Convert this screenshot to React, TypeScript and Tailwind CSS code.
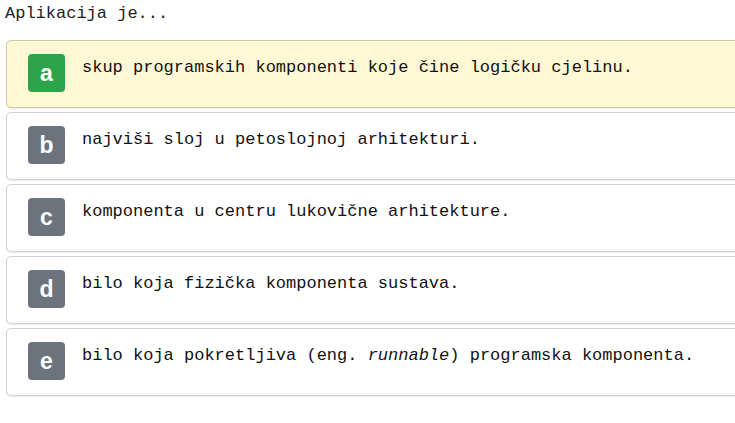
import React from 'react';

interface Option {
  key: string;
  text: React.ReactNode;
  correct?: boolean;
}

const options: Option[] = [
  { key: 'a', text: 'skup programskih komponenti koje čine logičku cjelinu.', correct: true },
  { key: 'b', text: 'najviši sloj u petoslojnoj arhitekturi.' },
  { key: 'c', text: 'komponenta u centru lukovične arhitekture.' },
  { key: 'd', text: 'bilo koja fizička komponenta sustava.' },
  {
    key: 'e',
    text: (
      <>
        bilo koja pokretljiva (eng. <em className="italic">runnable</em>) programska komponenta.
      </>
    ),
  },
];

const App: React.FC = () => {
  return (
    <div className="w-[735px] h-[423px] overflow-hidden bg-white font-['Courier_New','Liberation_Mono',monospace] text-[17px] text-[#111]">
      <p className="pl-[5px] pt-[3px] leading-[22px] text-[#222]">Aplikacija je...</p>

      <div className="mt-[15px] ml-[6px] mr-[-12px] flex flex-col gap-[4px]">
        {options.map((o) => (
          <div
            key={o.key}
            className={`h-[68px] flex items-start pl-[21px] pt-[13px] rounded-[5px] border shadow-[0_1px_1px_rgba(0,0,0,0.08)] ${
              o.correct ? 'bg-[#fff8d4] border-[#cfc9a8]' : 'bg-white border-[#d2d2d2]'
            }`}
          >
            <span
              className={`w-[37px] h-[38px] shrink-0 flex items-center justify-center rounded-[4px] text-white font-bold text-[23px] pt-[1px] font-['Liberation_Sans',Arial,sans-serif] ${
                o.correct ? 'bg-[#2ba44a]' : 'bg-[#6c737d]'
              }`}
            >
              {o.key}
            </span>
            <span className="ml-[17px] leading-[26px] pt-[1px]">{o.text}</span>
          </div>
        ))}
      </div>
    </div>
  );
};

export default App;
